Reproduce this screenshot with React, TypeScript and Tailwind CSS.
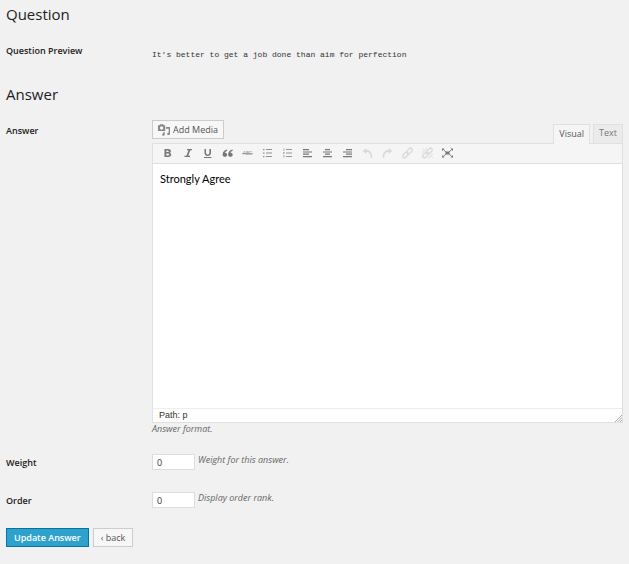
import type { ReactNode } from "react";

type Tool = {
  name: string;
  icon: ReactNode;
  disabled?: boolean;
};

const tools: Tool[] = [
  { name: "Bold", icon: <path fillRule="evenodd" d="M2.500 1h3.800c3 0 3.300 2.900 1.500 3.800C10 5.600 9.600 9 6.400 9H2.500zM4.300 2.400v1.700h1.600c1.200 0 1.200-1.700 0-1.700zM4.300 5.500v2.100h1.800c1.500 0 1.500-2.100 0-2.100z" /> },
  { name: "Italic", icon: <path d="M5 1h5v1.200H8.300L6.200 7.800H8V9H2.500V7.800h1.900l2.100-5.600H5z" /> },
  { name: "Underline", icon: <path d="M2.500 1h1.500v3.800c0 2.400 3.400 2.400 3.400 0V1H9v4c0 4-6.500 4-6.500 0zM2 9h7.500v1H2z" /> },
  { name: "Blockquote", icon: <path d="M5 1.500C3 2 .6 3.600.6 6.400c0 3.200 4.600 3 4.600.3 0-1.300-1-2-2.100-2 .2-1 1.100-1.700 2.300-2.200zM10.500 1.500C8.500 2 6.100 3.600 6.100 6.400c0 3.200 4.600 3 4.600.3 0-1.300-1-2-2.100-2 .2-1 1.100-1.700 2.300-2.200z" /> },
  {
    name: "Strikethrough",
    icon: (
      <g opacity=".85">
        <text x="5.500" y="7" textAnchor="middle" fontSize="5">ABC</text>
        <path d="M0 5h11v.7H0z" />
      </g>
    ),
  },
  { name: "Bulleted list", icon: <path d="M1 1h1.500v1.300H1zM4 1h6v1H4zM1 4.500h1.500v1.300H1zM4 4.500h6v1H4zM1 8h1.500v1.300H1zM4 8h6v1H4z" opacity=".8" /> },
  { name: "Numbered list", icon: <path d="M1.500.5h.8v2.200h-.8zM4 1h6v1H4zM1 4h1.500v.7H1zM1 5.300h1.500V6H1zM4 4.500h6v1H4zM1 7.500h1.500v.6H1zM1.700 8.100h.8v1.200H1v-.5h.7zM4 8h6v1H4z" opacity=".75" /> },
  { name: "Align left", icon: <path d="M1 1h6v1.300H1zM1 3.500h9v1H1zM1 5.500h6v1.300H1zM1 8h9v1.300H1z" /> },
  { name: "Align center", icon: <path d="M3 1h5v1.300H3zM1 3.500h9v1H1zM3 5.500h5v1.300H3zM1 8h9v1.300H1z" /> },
  { name: "Align right", icon: <path d="M4 1h6v1.300H4zM1 3.500h9v1H1zM4 5.500h6v1.300H4zM1 8h9v1.300H1z" /> },
  { name: "Undo", icon: <path d="M.5 3L4.500 0v2.100C8 2.100 10.500 4.500 10.200 10H8.700C8.800 5.700 7 4 4.500 4v2z" />, disabled: true },
  { name: "Redo", icon: <path d="M10.500 3L6.500 0v2.100C3 2.100.5 4.500.8 10h1.500C2.200 5.700 4 4 6.500 4v2z" />, disabled: true },
  {
    name: "Insert link",
    icon: (
      <g fill="none" stroke="currentColor" strokeWidth="1.400">
        <rect x="-3.200" y="-1.800" width="6.400" height="3.600" rx="1.800" transform="translate(3.500 7) rotate(-45)" />
        <rect x="-3.200" y="-1.800" width="6.400" height="3.600" rx="1.800" transform="translate(7.500 3) rotate(-45)" />
      </g>
    ),
    disabled: true,
  },
  {
    name: "Remove link",
    icon: (
      <g fill="none" stroke="currentColor" strokeWidth="1.400">
        <rect x="-2.900" y="-1.800" width="5.800" height="3.600" rx="1.800" transform="translate(3.300 7.200) rotate(-45)" />
        <rect x="-2.900" y="-1.800" width="5.800" height="3.600" rx="1.800" transform="translate(7.700 2.800) rotate(-45)" />
        <path d="M.5.500l3 3M4 0v2M0 4h2M7.500 6.500l3 3M7 8v2.500M9 6.500h2" strokeWidth="1" />
      </g>
    ),
    disabled: true,
  },
  {
    name: "Fullscreen",
    icon: (
      <g>
        <path d="M3.500 3.500h4v3h-4zM0 .5h2.500L0 3zM11 .5H8.500L11 3zM0 9.500h2.500L0 7zM11 9.500H8.500L11 7z" />
        <path d="M.8 1.200l3.200 2.800M10.200 1.200L7 4M.8 8.800L4 6M10.200 8.800L7 6" stroke="currentColor" strokeWidth=".9" />
      </g>
    ),
  },
];

function ToolButton({ name, icon, disabled }: Tool) {
  return (
    <button
      type="button"
      aria-label={name}
      disabled={disabled}
      className="flex h-[18px] w-5 items-center justify-center text-[#777] disabled:text-[#dadada]"
    >
      <svg width="11" height="10" viewBox="0 0 11 10" fill="currentColor" overflow="visible">
        {icon}
      </svg>
    </button>
  );
}

function MediaIcon() {
  return (
    <svg width="12" height="12" viewBox="0 0 12 12" fill="#888">
      <path fillRule="evenodd" d="M0 1.300h1.500L2.200.3h3l.7 1h1.300V7H0zM3.600 2.300a1.700 1.700 0 1 0 .01 0z" />
      <path d="M8 3h4v6.700c0 1.800-2.800 1.800-2.800.2 0-1.100 1-1.400 1.500-1.200V4.800H8zM5.300 8h1.400v2.500c0 1.600-2.500 1.600-2.500.2 0-1 .8-1.200 1.100-1.100z" />
    </svg>
  );
}

function NumberRow({ id, label, hint }: { id: string; label: string; hint: string }) {
  return (
    <div className="grid grid-cols-[146px_1fr]">
      <label htmlFor={id} className="pt-[3px] leading-3 font-semibold text-[#222]">
        {label}
      </label>
      <div className="flex items-start gap-[3px]">
        <input
          id={id}
          type="text"
          defaultValue="0"
          className="h-4 w-[43px] border border-[#ddd] bg-white px-1 text-[#333]"
        />
        <p className="leading-3 text-[#666] italic">{hint}</p>
      </div>
    </div>
  );
}

export default function App() {
  return (
    <div className="min-h-screen bg-[#f1f1f1] px-1.5 pt-[3px] font-['Open_Sans',sans-serif] text-[9px] text-[#444]">
      <form>
        <h3 className="text-[15px] leading-[22px] text-[#222]">Question</h3>
        <div className="mt-5 grid grid-cols-[146px_1fr]">
          <span className="leading-3 font-semibold text-[#222]">Question Preview</span>
          <p className="pt-1 font-['Liberation_Mono',monospace] text-[8px] leading-3 text-[#333]">
            It's better to get a job done than aim for perfection
          </p>
        </div>

        <h3 className="mt-[22px] text-[15px] leading-[22px] text-[#222]">Answer</h3>
        <div className="mt-[15px] grid grid-cols-[146px_1fr]">
          <label htmlFor="answer" className="pt-[5px] leading-3 font-semibold text-[#222]">
            Answer
          </label>
          <div className="min-w-0">
            <div className="flex h-[23px] items-start justify-between">
              <button
                type="button"
                className="flex h-[19px] items-center gap-[3px] border border-[#ccc] bg-[#f7f7f7] px-[5px] text-[#555]"
              >
                <MediaIcon />
                Add Media
              </button>
              <div className="flex gap-[3px] self-end">
                <button type="button" className="z-10 -mb-px h-5 border border-b-0 border-[#e0e0e0] bg-[#f5f5f5] px-[5px] pb-0.5 text-[#555]">
                  Visual
                </button>
                <button type="button" className="h-[19px] border border-b-0 border-[#e0e0e0] bg-[#ebebeb] px-[5px] pb-0.5 text-[#777]">
                  Text
                </button>
              </div>
            </div>
            <div className="border border-[#e0e0e0] bg-white">
              <div className="flex h-5 items-start border-b border-[#dedede] bg-[#f5f5f5] pl-1">
                {tools.map((tool) => (
                  <ToolButton key={tool.name} {...tool} />
                ))}
              </div>
              <textarea
                id="answer"
                defaultValue="Strongly Agree"
                className="block h-[244px] w-full resize-none px-[7px] py-2 font-['Lato',sans-serif] text-[11px] leading-[14px] text-black outline-none"
              />
              <div className="flex h-3.5 items-end justify-between border-t border-[#eee] pl-1.5">
                <span className="font-['Liberation_Sans',sans-serif] leading-[13px] text-[#333]">Path: p</span>
                <svg width="8" height="8" viewBox="0 0 8 8" stroke="#888" strokeWidth="1">
                  <path d="M1 8l7-7M3.500 8L8 3.500M6 8l2-2" strokeDasharray="1 .4" />
                </svg>
              </div>
            </div>
            <p className="leading-3 text-[#666] italic">Answer format.</p>
          </div>
        </div>

        <div className="mt-[19px] flex flex-col gap-[22px]">
          <NumberRow id="weight" label="Weight" hint="Weight for this answer." />
          <NumberRow id="order" label="Order" hint="Display order rank." />
        </div>

        <div className="mt-5 flex gap-1">
          <button type="submit" className="h-[19px] border border-[#0074a2] bg-[#2ea2cc] px-[7px] font-semibold text-white">
            Update Answer
          </button>
          <button type="button" className="h-[19px] border border-[#ccc] bg-[#f7f7f7] px-[7px] text-[#555]">
            ‹ back
          </button>
        </div>
      </form>
    </div>
  );
}
